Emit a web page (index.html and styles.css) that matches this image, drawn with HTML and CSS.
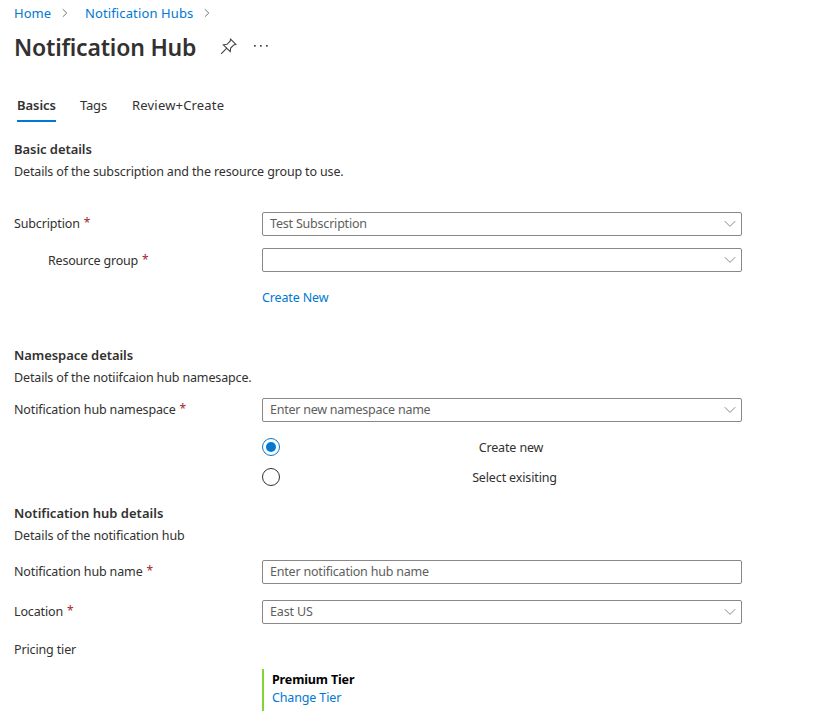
FILE: index.html
```
<!DOCTYPE html>
<html lang="en">
<head>
<meta charset="utf-8">
<title>Notification Hub</title>
<link rel="stylesheet" href="styles.css">
</head>
<body>
<svg class="defs" width="0" height="0">
  <symbol id="down" viewBox="0 0 12 8"><path d="M.8 1.200 6 6.400l5.200-5.200" fill="none" stroke="currentColor"/></symbol>
  <symbol id="right" viewBox="0 0 6 10"><path d="M.8 1.200 4.800 5 .8 8.800" fill="none" stroke="currentColor" stroke-width=".9"/></symbol>
</svg>
<header>
  <nav class="crumbs">
    <a>Home</a><svg class="sep"><use href="#right"/></svg>
    <a class="wide">Notification Hubs</a><svg class="sep"><use href="#right"/></svg>
  </nav>
  <div class="title-bar">
    <h1>Notification Hub</h1>
    <svg class="pin" viewBox="0 0 18 18" fill="none" stroke="#444" stroke-width="1.200"><path d="M11.200 1.200 16.800 6.800 14.600 7.300 11.300 10.600 10.800 14.400 3.600 7.200 7.400 6.700 10.700 3.400ZM7.200 10.800 1.200 16.800"/></svg>
    <svg class="more" viewBox="0 0 16 4" fill="#444"><rect x="1" y="1" width="1.700" height="1.700"/><rect x="7" y="1" width="1.700" height="1.700"/><rect x="13" y="1" width="1.700" height="1.700"/></svg>
  </div>
  <nav class="tabs">
    <a class="tab active">Basics</a>
    <a class="tab">Tags</a>
    <a class="tab wide">Review+Create</a>
  </nav>
</header>
<main>
  <section class="basic">
    <h2>Basic details</h2>
    <p>Details of the subscription and the resource group to use.</p>
    <div class="row">
      <label>Subcription<i>*</i></label>
      <div class="field"><span class="snug">Test Subscription</span><svg><use href="#down"/></svg></div>
    </div>
    <div class="row">
      <label class="indent snug">Resource group<i>*</i></label>
      <div class="field"><span></span><svg><use href="#down"/></svg></div>
    </div>
    <a class="create">Create New</a>
  </section>
  <section class="namespace">
    <h2>Namespace details</h2>
    <p>Details of the notiifcaion hub namesapce.</p>
    <div class="row">
      <label>Notification hub namespace<i>*</i></label>
      <div class="field"><span class="tight">Enter new namespace name</span><svg><use href="#down"/></svg></div>
    </div>
    <div class="radios">
      <div class="radio on"><b></b><span>Create new</span></div>
      <div class="radio"><b></b><span class="existing">Select exisiting</span></div>
    </div>
  </section>
  <section class="hub">
    <h2 class="loose">Notification hub details</h2>
    <p class="hub-note">Details of the notification hub</p>
    <div class="row">
      <label>Notification hub name<i>*</i></label>
      <div class="field"><span class="snug">Enter notification hub name</span></div>
    </div>
    <div class="row">
      <label>Location<i>*</i></label>
      <div class="field"><span>East US</span><svg><use href="#down"/></svg></div>
    </div>
    <div class="row pricing"><label>Pricing tier</label></div>
    <div class="tier">
      <strong>Premium Tier</strong>
      <a>Change Tier</a>
    </div>
  </section>
</main>
</body>
</html>
```
FILE: styles.css
```
* { box-sizing: border-box; }
body {
  margin: 0;
  padding: 4px 14px 0;
  width: 817px;
  height: 727px;
  overflow: hidden;
  background: #fff;
  color: #323130;
  font: 12.5px/20px "Noto Sans", "Open Sans", sans-serif;
  letter-spacing: -.14px;
}
.defs { display: block; height: 0; }
a { color: #0078d4; }
h1, h2, p { margin: 0; }
.crumbs { display: flex; align-items: center; height: 18px; font-size: 13px; letter-spacing: 0; }
.sep { width: 6px; height: 10px; margin: 0 17px 0 11px; color: #666; }
.crumbs .wide { letter-spacing: .12px; }
.title-bar { display: flex; align-items: center; height: 50px; }
h1 { width: 206px; font-size: 23px; font-weight: 600; line-height: 32px; letter-spacing: -.2px; }
.pin { width: 17px; height: 17px; margin-top: -2px; }
.more { width: 16px; height: 4px; margin: -2px 0 0 16px; }
.tabs { display: flex; gap: 24px; margin: 18px 0 0 3px; }
.tab { height: 32px; padding-top: 5px; color: #323130; font-size: 13px; }
.tab.wide { letter-spacing: .18px; margin-left: 1px; }
.tab.active { border-bottom: 2px solid #0078d4; font-weight: 600; letter-spacing: -.05px; }
h2 { font-size: 13px; font-weight: 600; line-height: 20px; letter-spacing: -.06px; }
h2.loose { letter-spacing: .01px; }
p { height: 20px; margin-top: 3px; }
.basic { padding-top: 17px; }
.row { display: grid; grid-template-columns: 248px 480px; grid-template-rows: 24px; line-height: 24px; }
.basic .row { margin-bottom: 12px; }
.basic p { margin-bottom: 30px; }
label { display: flex; gap: 4px; }
.indent { padding-left: 34px; line-height: 26px; }
.snug { letter-spacing: -.2px; }
.tight { letter-spacing: -.24px; }
i { margin-top: -1px; color: #a4262c; font-size: 12px; font-style: normal; }
.field {
  display: flex;
  align-items: center;
  justify-content: space-between;
  padding: 0 5px 0 7px;
  border: 1px solid #8a8886;
  border-radius: 2px;
  color: #605e5c;
  line-height: 22px;
}
.field svg { width: 12px; height: 8px; color: #8a8886; }
.create { display: block; height: 20px; margin: 16px 0 0 248px; }
.namespace { padding-top: 37px; }
.namespace p { margin-bottom: 10px; }
.radios { width: 480px; margin: 10px 0 0 248px; }
.radio { display: grid; grid-template-columns: 18px 1fr; align-items: center; height: 30px; text-align: center; }
.radio span { padding-top: 1px; }
.radio .existing { padding-left: 7px; }
.radio b { display: grid; place-items: center; width: 18px; height: 18px; border: 1px solid #323130; border-radius: 50%; }
.radio.on b { border-color: #0078d4; }
.on b::after { content: ""; width: 10px; height: 10px; border-radius: 50%; background: #0078d4; }
.hub { padding-top: 11px; }
.hub p { margin-bottom: 14px; }
.hub-note { letter-spacing: -.11px; }
.hub .row { margin-bottom: 16px; }
.hub .pricing { height: 31px; margin: -2px 0 0; }
.tier { width: 300px; height: 42px; margin-left: 248px; padding: 2px 0 0 8px; border-left: 2px solid #84d335; line-height: 18px; }
.tier strong { display: block; color: #000; font-weight: 700; }
```
